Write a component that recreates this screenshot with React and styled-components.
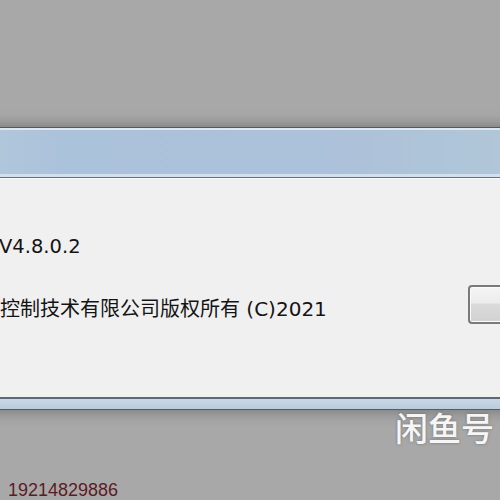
import React from "react";
import styled, { createGlobalStyle } from "styled-components";

const GlobalStyle = createGlobalStyle`
  html, body {
    margin: 0;
    padding: 0;
  }
  body {
    font-family: "DejaVu Sans", "Noto Sans CJK SC", sans-serif;
  }
`;

function App() {
  return (
    <Page>
      <GlobalStyle />
      <Window>
        <TitleBar />
        <Content>
          <VersionLine>V4.8.0.2</VersionLine>
          <CopyRow>
            <CopyText>控制技术有限公司版权所有 (C)2021</CopyText>
            <OkButton />
          </CopyRow>
        </Content>
        <BottomFrame />
      </Window>
      <Below>
        <Watermark>闲鱼号</Watermark>
        <Phone>19214829886</Phone>
      </Below>
    </Page>
  );
}

export default App;

const Page = styled.div`
  width: 500px;
  height: 500px;
  overflow: hidden;
  background: #a8a8a8;
  padding-top: 127px;
  box-sizing: border-box;
`;

const Window = styled.div`
  width: 620px;
  margin-left: -60px;
  box-shadow: 0 0 14px rgba(40, 40, 40, 0.45);
`;

const TitleBar = styled.div`
  height: 44px;
  border-top: 1px solid #4f5965;
  border-bottom: 1px solid #66707c;
  box-shadow: inset 0 2px 0 #dde7f1, inset 0 -3px 0 #d3dfeb;
  background: linear-gradient(
    90deg,
    #b3cadb 0%,
    #abc2db 20%,
    #acc1da 60%,
    #afc5d8 85%,
    #b3cad8 100%
  );
  padding-top: 2px;
  padding-bottom: 3px;
`;

const Content = styled.div`
  height: 219px;
  box-sizing: border-box;
  padding: 56px 0 0 60px;
  background: #f0f0f0;
  border-top: 1px solid #fafbfd;
  color: #141414;
`;

const VersionLine = styled.div`
  font-size: 19.5px;
  line-height: 24px;
  height: 24px;
  margin-left: -1px;
`;

const CopyRow = styled.div`
  display: grid;
  grid-template-columns: 468px 80px;
  align-items: start;
  margin-top: 26px;
`;

const CopyText = styled.div`
  font-size: 20px;
  line-height: 24px;
  margin-top: 12px;
  white-space: nowrap;
`;

const OkButton = styled.div`
  height: 39px;
  box-sizing: border-box;
  border: 2px solid #7a7a7a;
  border-radius: 4px;
  background: linear-gradient(
    180deg,
    #f4f4f4 0%,
    #ececec 45%,
    #dadada 50%,
    #d2d2d2 100%
  );
  box-shadow: inset 0 0 0 1px #fbfbfb;
`;

const BottomFrame = styled.div`
  height: 10px;
  border-top: 2px solid #5d6976;
  border-bottom: 1px solid #535d68;
  background: linear-gradient(180deg, #c9d8e6 0%, #b9ccdd 100%);
`;

const Below = styled.div`
  display: flex;
  flex-direction: column;
  padding-top: 1px;
`;

const Watermark = styled.div`
  align-self: flex-end;
  margin-right: 6px;
  font-family: "Noto Sans CJK SC", sans-serif;
  font-size: 33px;
  font-weight: 500;
  line-height: 33px;
  color: #f6f6f6;
  text-shadow: 0 0 3px rgba(80, 80, 80, 0.6);
`;

const Phone = styled.div`
  margin-top: 36px;
  margin-left: 8px;
  font-family: "Liberation Sans", sans-serif;
  font-size: 18px;
  line-height: 20px;
  color: #5b1b25;
`;
